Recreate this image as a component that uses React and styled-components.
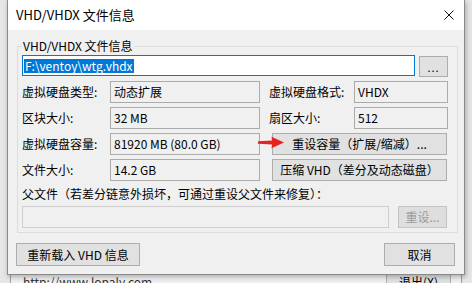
import React from 'react';
import styled, { createGlobalStyle } from 'styled-components';

const FONT = `"Noto Sans CJK SC", "Noto Sans", sans-serif`;

const Global = createGlobalStyle`
  html, body { margin: 0; padding: 0; background: #e6e6e6; }
  body { width: 472px; height: 283px; overflow: hidden; }
  * { box-sizing: border-box; }
`;

const Desktop = styled.div`
  position: relative;
  width: 472px;
  height: 283px;
  overflow: hidden;
  background: #e6e6e6;
  font-family: ${FONT};
  font-size: 12px;
  color: #000;
`;

const BackWindow = styled.div`
  position: absolute;
  left: 10px;
  top: 0;
  width: 452px;
  height: 300px;
  background: #f0f0f0;
  border-left: 1px solid #a0a0a0;
  border-right: 1px solid #a0a0a0;
  display: flex;
  flex-direction: column;
  justify-content: flex-end;
`;

const BackFooter = styled.div`
  display: flex;
  align-items: center;
  justify-content: space-between;
  padding: 0 10px 6px 12px;
`;

const BackLink = styled.span`
  color: #333;
  font-size: 12px;
  line-height: 16px;
`;

const BackButton = styled.div`
  width: 65px;
  height: 24px;
  border: 1px solid #adadad;
  background: #e1e1e1;
  display: flex;
  align-items: center;
  justify-content: center;
  line-height: 16px;
`;

const Dialog = styled.div`
  position: absolute;
  left: 7px;
  top: 0;
  width: 458px;
  height: 275px;
  background: #f0f0f0;
  border: 1px solid #8a8a8a;
  border-top: none;
  box-shadow: 1px 2px 5px rgba(0, 0, 0, 0.28);
  display: flex;
  flex-direction: column;
`;

const TitleBar = styled.div`
  height: 30px;
  flex: none;
  background: #fff;
  display: flex;
  align-items: center;
  justify-content: space-between;
  padding: 0 10px 0 8px;
`;

const TitleText = styled.span`
  font-size: 13px;
  line-height: 16px;
  color: #000;
`;

const CloseIcon = () => (
  <svg width="10" height="10" viewBox="0 0 10 10">
    <path d="M0.5 0.5 L9.5 9.5 M9.5 0.5 L0.5 9.5" stroke="#111" strokeWidth="1" fill="none" />
  </svg>
);

const Body = styled.div`
  flex: 1;
  display: flex;
  flex-direction: column;
  padding: 16px 6px 0 9px;
`;

const GroupBox = styled.div`
  position: relative;
  border: 1px solid #dcdcdc;
  padding: 8px 7px 4px 4px;
  display: flex;
  flex-direction: column;
`;

const Legend = styled.span`
  position: absolute;
  top: -9px;
  left: 4px;
  padding: 0 1px;
  background: #f0f0f0;
  line-height: 16px;
`;

const PathRow = styled.div`
  display: flex;
  align-items: flex-start;
  gap: 4px;
  padding-right: 2px;
`;

const PathInput = styled.div`
  flex: 1;
  height: 21px;
  border: 1px solid #0078d7;
  background: #fff;
  display: flex;
  align-items: center;
  padding-left: 1px;
`;

const Selected = styled.span`
  background: #0078d7;
  color: #fff;
  line-height: 14px;
  padding: 0 1px;
`;

const Button = styled.div`
  height: ${(p) => p.$h || 22}px;
  width: ${(p) => (p.$w ? `${p.$w}px` : 'auto')};
  border: 1px solid ${(p) => (p.$disabled ? '#c4c4c4' : '#adadad')};
  background: ${(p) => (p.$disabled ? '#dedede' : '#e1e1e1')};
  color: ${(p) => (p.$disabled ? '#9a9a9a' : '#000')};
  display: flex;
  align-items: center;
  justify-content: center;
  line-height: 16px;
  white-space: nowrap;
  flex: none;
`;

const BrowseButton = styled(Button)`
  margin-top: 1px;
  font-size: 11px;
  letter-spacing: 1px;
`;

const Grid = styled.div`
  display: grid;
  grid-template-columns: 88px 150px 1fr 96px;
  grid-auto-rows: 22px;
  row-gap: 4px;
  margin-top: 4px;
`;

const Label = styled.div`
  display: flex;
  align-items: center;
  line-height: 16px;
  white-space: nowrap;
  padding-left: ${(p) => (p.$right ? 9 : 0)}px;
`;

const Field = styled.div`
  border: 1px solid #ababab;
  background: #f0f0f0;
  display: flex;
  align-items: center;
  padding-left: 3px;
  line-height: 16px;
  white-space: nowrap;
  margin-right: ${(p) => (p.$right ? 2 : 0)}px;
`;

const ActionCell = styled.div`
  grid-column: 3 / 5;
  position: relative;
  display: flex;
  padding: 0 3px 0 12px;
`;

const WideButton = styled(Button)`
  flex: 1;
`;

const Arrow = styled.svg`
  position: absolute;
  left: -2px;
  top: 3px;
`;

const ParentLabel = styled.div`
  margin-top: 5px;
  line-height: 16px;
  white-space: nowrap;
`;

const ParentRow = styled.div`
  display: flex;
  gap: 9px;
  margin-top: 4px;
  padding-right: 3px;
`;

const ParentField = styled.div`
  flex: 1;
  height: 22px;
  border: 1px solid #cfcfcf;
  background: #f0f0f0;
`;

const Footer = styled.div`
  display: flex;
  justify-content: space-between;
  margin: 10px 3px 0 -1px;
`;

export default function App() {
  return (
    <Desktop>
      <Global />
      <BackWindow>
        <BackFooter>
          <BackLink>http://www.lopaly.com</BackLink>
          <BackButton>退出(X)</BackButton>
        </BackFooter>
      </BackWindow>
      <Dialog>
        <TitleBar>
          <TitleText>VHD/VHDX 文件信息</TitleText>
          <CloseIcon />
        </TitleBar>
        <Body>
          <GroupBox>
            <Legend>VHD/VHDX 文件信息</Legend>
            <PathRow>
              <PathInput>
                <Selected>F:\ventoy\wtg.vhdx</Selected>
              </PathInput>
              <BrowseButton $w={29} $h={21}>...</BrowseButton>
            </PathRow>
            <Grid>
              <Label>虚拟硬盘类型:</Label>
              <Field>动态扩展</Field>
              <Label $right>虚拟硬盘格式:</Label>
              <Field $right>VHDX</Field>

              <Label>区块大小:</Label>
              <Field>32 MB</Field>
              <Label $right>扇区大小:</Label>
              <Field $right>512</Field>

              <Label>虚拟硬盘容量:</Label>
              <Field>81920 MB (80.0 GB)</Field>
              <ActionCell>
                <WideButton>重设容量（扩展/缩减）...</WideButton>
                <Arrow width="26" height="13" viewBox="0 0 26 13">
                  <path d="M0 5.2 L14 4.6 L13.5 0.8 L26 6.5 L13.5 12.2 L14 8.4 L0 7.8 Z" fill="#e52420" />
                </Arrow>
              </ActionCell>

              <Label>文件大小:</Label>
              <Field>14.2 GB</Field>
              <ActionCell>
                <WideButton>压缩 VHD（差分及动态磁盘）</WideButton>
              </ActionCell>
            </Grid>
            <ParentLabel>父文件（若差分链意外损坏，可通过重设父文件来修复）：</ParentLabel>
            <ParentRow>
              <ParentField />
              <Button $w={49} $disabled>重设...</Button>
            </ParentRow>
          </GroupBox>
          <Footer>
            <Button $w={124} $h={23}>重新载入 VHD 信息</Button>
            <Button $w={71} $h={23}>取消</Button>
          </Footer>
        </Body>
      </Dialog>
    </Desktop>
  );
}
